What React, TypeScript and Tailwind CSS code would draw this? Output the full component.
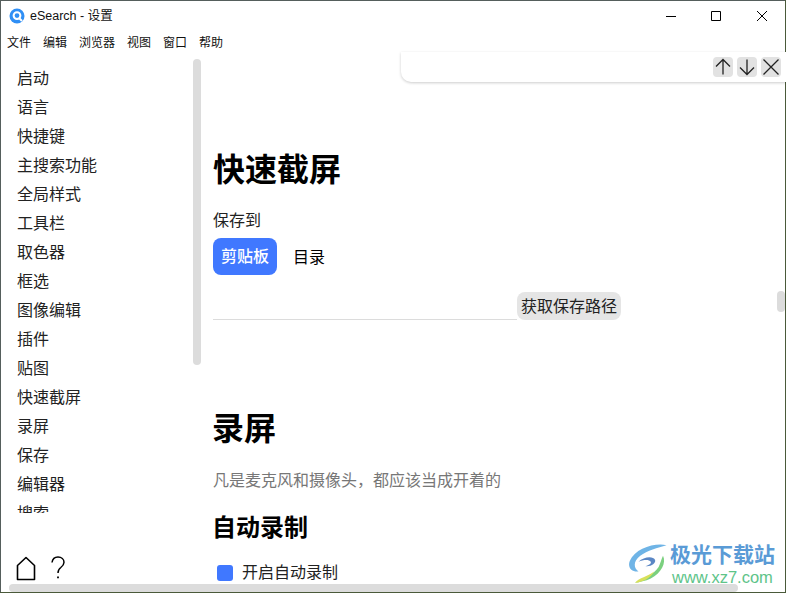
import React from 'react';

const menus = ['文件', '编辑', '浏览器', '视图', '窗口', '帮助'];

const navItems = [
  '启动', '语言', '快捷键', '主搜索功能', '全局样式', '工具栏', '取色器', '框选',
  '图像编辑', '插件', '贴图', '快速截屏', '录屏', '保存', '编辑器', '搜索',
];

const font = "font-['Liberation_Sans','Noto_Sans_CJK_SC',sans-serif]";

const IconBtn: React.FC<{ d: string }> = ({ d }) => (
  <span className="flex h-[20px] w-[20px] items-center justify-center rounded-[4px] bg-[#e2e2e2]">
    <svg width="20" height="20" viewBox="0 0 20 20" fill="none" stroke="#222" strokeWidth="1.3">
      <path d={d} />
    </svg>
  </span>
);

const Sidebar: React.FC = () => (
  <aside className="relative w-[200px] shrink-0 flex flex-col">
    <nav className="h-[460px] overflow-hidden pl-[16px] pt-[11px]">
      {navItems.map((item) => (
        <div key={item} className="h-[29px] leading-[29px] text-[16px] text-[#222]">
          {item}
        </div>
      ))}
    </nav>
    <div className="flex items-start gap-[14px] pl-[15px] pt-[43px]">
      <svg width="20" height="25" viewBox="0 0 20 25" fill="none" stroke="#000" strokeWidth="1.6">
        <path d="M1.5 23.5V9.5L10 1.5l8.5 8v14z" strokeLinejoin="round" />
      </svg>
      <svg width="16" height="24" viewBox="0 0 16 24" fill="none" stroke="#000" strokeWidth="1.5">
        <path d="M2 6.5C2.5 3 5 1 8 1c3.500 0 6 2.300 6 5.300 0 2.500-1.500 3.900-3.200 5.200C9 12.800 8 14 8 17" />
        <path d="M8 20.500v1.800" strokeWidth="1.800" />
      </svg>
    </div>
    <div className="absolute left-[192px] top-[6px] h-[306px] w-[8px] rounded-[4px] bg-[#dcdcdc]" />
  </aside>
);

const Content: React.FC = () => (
  <main className="flex-1 min-w-0 pl-[12px] text-[#222]">
    <h1 className="mt-[97px] text-[32px] leading-[40px] font-bold text-black">快速截屏</h1>
    <p className="mt-[20px] text-[16px] leading-[22px]">保存到</p>
    <div className="mt-[6px] flex items-center">
      <span className="flex h-[37px] w-[64px] items-center justify-center rounded-[8px] bg-[#4078ff] pt-[1px] text-[16px] font-medium text-white">
        剪贴板
      </span>
      <span className="ml-[16px] pt-[2px] text-[16px] text-black">目录</span>
    </div>
    <div className="mt-[17px] flex h-[28px] items-stretch">
      <div className="w-[304px] border-b border-[#dcdcdc]" />
      <span className="flex w-[104px] items-center justify-center rounded-[8px] bg-[#e5e5e5] pt-[1px] text-[16px]">
        获取保存路径
      </span>
    </div>
    <h1 className="mt-[89px] -ml-[1px] text-[32px] leading-[40px] font-bold text-black">录屏</h1>
    <p className="mt-[21px] text-[16px] leading-[22px] text-[#777]">凡是麦克风和摄像头，都应该当成开着的</p>
    <h2 className="mt-[20px] -ml-[1px] text-[24px] leading-[32px] font-bold text-black">自动录制</h2>
    <label className="mt-[18px] flex items-center pl-[4px]">
      <span className="h-[16px] w-[16px] rounded-[3px] bg-[#4078ff]" />
      <span className="ml-[9px] text-[16px] leading-[22px]">开启自动录制</span>
    </label>
  </main>
);

const Watermark: React.FC = () => (
  <div className="absolute left-[628px] top-[543px] flex items-start">
    <svg width="42" height="41" viewBox="0 0 48 46" fill="none">
      <path d="M44 2C30-1 8 6 2 20c-3 8 3 13 10 12C6 28 6 20 14 14 22 8 34 5 44 2z" fill="#6fb4e6" />
      <path d="M12 21c6-6 17-7 19-2 1 4-5 8-11 7 4-1 7-3 6-5-2-3-9-2-14 0z" fill="#5b87c5" />
      <path d="M40 14c4 8-2 20-14 26-6 3-13 4-18 5 9-4 22-10 27-18 2-4 3-9 5-13z" fill="#7bd07f" />
      <path d="M8 45c5-6 14-7 22-13-4 7-12 12-22 13z" fill="#d8e05a" />
    </svg>
    <div className="-mt-[1px]">
      <div className="text-[21px] leading-[25px] font-bold text-[#5a9bd6]">极光下载站</div>
      <div className="ml-[2px] text-[16.500px] leading-[20px] font-medium text-[#5ec489]">www.xz7.com</div>
    </div>
  </div>
);

export default function App() {
  return (
    <div className={`relative h-[593px] w-[786px] overflow-hidden bg-[#4a5a3a] ${font}`}>
      <div className="flex h-[592px] w-[785px] flex-col border-l border-t border-[#555e5c] bg-white">
        <header className="flex h-[30px] shrink-0 items-center">
          <svg className="ml-[8px]" width="16" height="16" viewBox="0 0 16 16">
            <circle cx="8" cy="8" r="7.500" fill="#2f8ff5" />
            <circle cx="8" cy="7.600" r="3.400" fill="none" stroke="#fff" strokeWidth="2" />
            <path d="M10 10l3 3" stroke="#fff" strokeWidth="2" />
          </svg>
          <span className="ml-[5px] text-[12.500px] text-[#111]">eSearch - 设置</span>
          <div className="ml-auto flex items-center text-black">
            <svg className="mr-[35px]" width="10" height="10" viewBox="0 0 10 10" stroke="#000" strokeWidth="1">
              <path d="M0 5.500h10" />
            </svg>
            <svg className="mr-[36px]" width="10" height="10" viewBox="0 0 10 10" fill="none" stroke="#000" strokeWidth="1">
              <path d="M.5 .5h9v9h-9z" />
            </svg>
            <svg className="mr-[18px]" width="10" height="10" viewBox="0 0 10 10" stroke="#000" strokeWidth="1">
              <path d="M0 0l10 10M10 0L0 10" />
            </svg>
          </div>
        </header>
        <div className="flex h-[22px] shrink-0 items-center gap-[12px] pl-[6px] pt-[1px] text-[12px] text-[#111]">
          {menus.map((m) => (
            <span key={m}>{m}</span>
          ))}
        </div>
        <div className="flex min-h-0 flex-1 overflow-hidden">
          <Sidebar />
          <Content />
        </div>
      </div>

      <div className="absolute left-[401px] top-[52px] flex h-[30px] w-[385px] items-end justify-end gap-[4px] rounded-bl-[10px] bg-white pb-[5px] pr-[5px] shadow-[0_1px_3px_rgba(0,0,0,0.2)]">
        <IconBtn d="M10 2.500v15M3 9.500l7-7 7 7" />
        <IconBtn d="M10 2.500v15M3 10.500l7 7 7-7" />
        <IconBtn d="M2.500 2.500l15 15M17.500 2.500l-15 15" />
      </div>

      <div className="absolute left-[777px] top-[291px] h-[21px] w-[8px] rounded-[4px] bg-[#dcdcdc]" />
      <div className="absolute left-[9px] top-[584px] h-[8px] w-[729px] rounded-[4px] bg-[#dcdcdc]" />
      <Watermark />
    </div>
  );
}
